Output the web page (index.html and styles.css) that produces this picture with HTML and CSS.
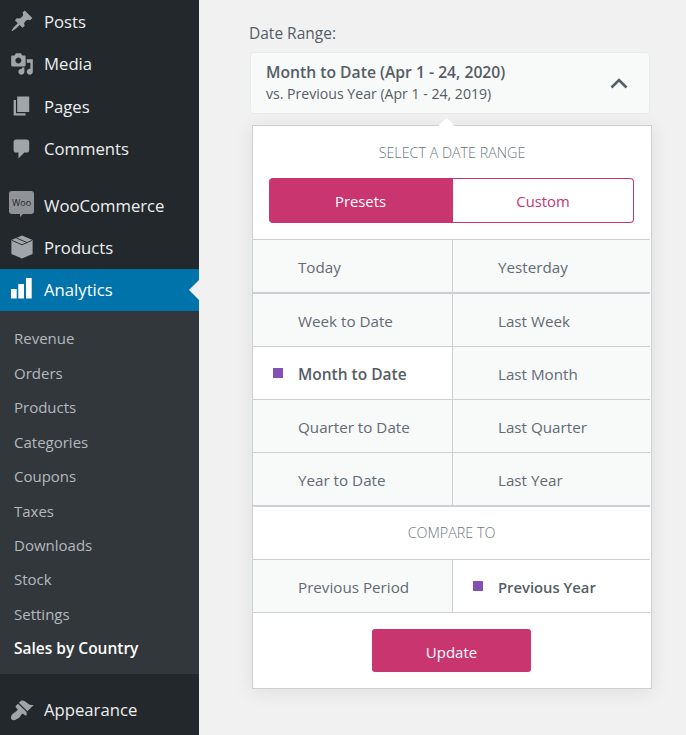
FILE: index.html
```html
<!DOCTYPE html>
<html>
<head>
<title>Analytics</title>
<link rel="stylesheet" href="styles.css">
</head>
<body>

<div class="sidebar">
  <div class="menu">
    <a class="menu-item"><svg class="icon" viewBox="0 0 20 20"><path d="M10.44 3.02l1.82-1.82 6.36 6.35-1.83 1.82c-1.05-.68-2.48-.57-3.41.36l-.75.75c-.92.93-1.04 2.35-.35 3.41l-1.83 1.82-2.41-2.41-2.8 2.79c-.42.42-3.38 2.71-3.8 2.29s1.86-3.39 2.28-3.81l2.79-2.79L4.1 9.36l1.83-1.82c1.05.69 2.48.57 3.41-.36l.75-.75c.93-.92 1.04-2.35.35-3.41z"/></svg>Posts</a>
    <a class="menu-item"><svg class="icon" viewBox="0 0 20 20"><path d="M13 11V4c0-.55-.45-1-1-1h-1.67L9 1H5L3.67 3H2c-.55 0-1 .45-1 1v7c0 .55.45 1 1 1h10c.55 0 1-.45 1-1zM7 4.5c1.38 0 2.5 1.12 2.5 2.5S8.38 9.5 7 9.5 4.5 8.38 4.5 7 5.62 4.5 7 4.5zM14 6h5v10.5c0 1.38-1.12 2.5-2.5 2.5S14 17.88 14 16.5s1.12-2.5 2.5-2.5c.17 0 .34.02.5.05V9h-3V6zm-4 8.05V13h2v3.5c0 1.38-1.12 2.5-2.5 2.5S7 17.88 7 16.5 8.12 14 9.5 14c.17 0 .34.02.5.05z"/></svg>Media</a>
    <a class="menu-item"><svg class="icon" viewBox="0 0 20 20"><path d="M6 15V2h10v13H6zm-1 1h8v2H3V5h2v11z"/></svg>Pages</a>
    <a class="menu-item"><svg class="icon" viewBox="0 0 20 20"><path d="M5 2h9c1.1 0 2 .9 2 2v7c0 1.1-.9 2-2 2h-2l-5 5v-5H5c-1.1 0-2-.9-2-2V4c0-1.1.9-2 2-2z"/></svg>Comments</a>
  </div>
  <div class="menu menu-next">
    <a class="menu-item"><span class="woo"><span class="woo-text">Woo</span></span>WooCommerce</a>
    <a class="menu-item"><svg class="icon" viewBox="0 0 24 26"><path d="M12 0.5L23.5 5.5V20.5L12 25.5L0.5 20.5V5.5Z"/><path d="M1 5.8L12 10.6L23 5.8M6 3.3L17.5 8.2" fill="none" stroke="#23282d" stroke-width="1"/></svg>Products</a>
    <a class="menu-item active"><svg class="icon" viewBox="0 0 21 21"><path d="M0 11h5.7v9.500H0zM7.300 6h5.700v14.500H7.300zM15 0h5.700v20.500H15z"/></svg>Analytics</a>
  </div>
  <div class="submenu">
    <a>Revenue</a>
    <a>Orders</a>
    <a>Products</a>
    <a>Categories</a>
    <a>Coupons</a>
    <a>Taxes</a>
    <a>Downloads</a>
    <a>Stock</a>
    <a>Settings</a>
    <a class="current">Sales by Country</a>
  </div>
  <div class="menu menu-last">
    <a class="menu-item"><svg class="icon" viewBox="0 0 20 20"><path d="M14.48 11.06L7.41 3.99l1.5-1.5c.5-.56 2.3-.47 3.51.32 1.21.8 1.43 1.28 2.91 2.1 1.18.64 2.45 1.26 4.45.85zm-.71.71L6.7 4.7 4.93 6.47c-.39.39-.39 1.02 0 1.41l1.06 1.06c.39.39.39 1.03 0 1.42-.6.6-1.43 1.11-2.21 1.69-.35.26-.7.53-1.01.84C1.43 13.23 0 16.5 1.41 17.91c1.41 1.42 4.68-.02 6.03-1.37.31-.31.58-.66.84-1.01.58-.78 1.09-1.61 1.69-2.21.39-.39 1.03-.39 1.42 0l1.06 1.06c.39.39 1.02.39 1.41 0z"/></svg>Appearance</a>
  </div>
</div>

<div class="main">
  <div class="label">Date Range:</div>
  <div class="trigger">
    <div class="trigger-text">
      <div class="trigger-title">Month to Date (Apr 1 - 24, 2020)</div>
      <div class="trigger-sub">vs. Previous Year (Apr 1 - 24, 2019)</div>
    </div>
    <svg class="chevron" viewBox="0 0 18 12"><path d="M1.500 10.500L9 3l7.500 7.500" fill="none" stroke="#555d66" stroke-width="2.600"/></svg>
  </div>
  <div class="panel">
    <div class="caret"></div>
    <div class="heading heading-top">SELECT A DATE RANGE</div>
    <div class="tabs">
      <div class="tab tab-on">Presets</div>
      <div class="tab">Custom</div>
    </div>
    <div class="options options-top">
      <div class="opt">Today</div>
      <div class="opt">Yesterday</div>
    </div>
    <div class="options options-main">
      <div class="opt">Week to Date</div>
      <div class="opt">Last Week</div>
      <div class="opt selected"><span class="mark"></span>Month to Date</div>
      <div class="opt">Last Month</div>
      <div class="opt">Quarter to Date</div>
      <div class="opt">Last Quarter</div>
      <div class="opt">Year to Date</div>
      <div class="opt">Last Year</div>
    </div>
    <div class="heading heading-compare">COMPARE TO</div>
    <div class="options options-compare">
      <div class="opt">Previous Period</div>
      <div class="opt selected"><span class="mark"></span>Previous Year</div>
    </div>
    <div class="footer">
      <div class="update">Update</div>
    </div>
  </div>
</div>

</body>
</html>
```

FILE: styles.css
```css
html, body {
    margin: 0;
    height: 735px;
    overflow: hidden;
}
body {
    display: flex;
    background-color: #f1f1f1;
    font-family: "Open Sans", sans-serif;
    color: #555d66;
}
.sidebar {
    width: 199px;
    height: 735px;
    flex-shrink: 0;
    background-color: #23282d;
}
.menu {
    padding-top: 0.4px;
}
.menu-next {
    padding-top: 14px;
}
.menu-last {
    padding-top: 15px;
}
.menu-item {
    position: relative;
    display: flex;
    align-items: center;
    height: 42.4px;
    padding-left: 44px;
    font-size: 16.700px;
    color: #eeeeee;
}
.icon {
    position: absolute;
    left: 10px;
    top: 9px;
    width: 24px;
    height: 24px;
    fill: #a0a5aa;
}
.woo {
    position: absolute;
    left: 9px;
    top: 7px;
    width: 25px;
    height: 23px;
    border-radius: 3px;
    background-color: #8f9398;
    display: flex;
    align-items: center;
    justify-content: center;
}
.woo::after {
    content: "";
    position: absolute;
    left: 11px;
    bottom: -3px;
    border-top: 3px solid #8f9398;
    border-right: 3px solid transparent;
}
.woo-text {
    font-size: 9px;
    color: #23282d;
}
.active {
    background-color: #0073aa;
    color: #ffffff;
}
.active .icon {
    fill: #ffffff;
    left: 11px;
    top: 9px;
    width: 21px;
    height: 21px;
}
.active::after {
    content: "";
    position: absolute;
    right: 0;
    top: 11px;
    border: 10px solid transparent;
    border-left: 0;
    border-right-color: #f1f1f1;
}
.submenu {
    background-color: #32373c;
    padding: 10px 0 8px;
}
.submenu a {
    display: flex;
    align-items: center;
    height: 34.450px;
    padding-left: 14px;
    font-size: 15px;
    color: #b4b9be;
}
.submenu .current {
    color: #ffffff;
    font-weight: 600;
    font-size: 15.500px;
}
.main {
    flex: 1;
    padding: 22px 0 0 50px;
}
.label {
    font-size: 15.500px;
    line-height: 22px;
    margin-bottom: 8px;
}
.trigger {
    box-sizing: border-box;
    width: 400px;
    height: 62px;
    margin-left: 1px;
    padding: 0 21px 0 15px;
    display: flex;
    align-items: center;
    justify-content: space-between;
    background-color: #f8f9f9;
    border: 1px solid #e8eaeb;
    border-radius: 4px;
}
.trigger-title {
    font-size: 15.700px;
    font-weight: 600;
    line-height: 21px;
}
.trigger-sub {
    font-size: 14.100px;
    line-height: 21px;
}
.chevron {
    width: 18px;
    height: 12px;
}
.panel {
    position: relative;
    box-sizing: border-box;
    width: 400px;
    height: 564px;
    margin: 11px 0 0 3px;
    background-color: #ffffff;
    border: 1px solid #ccd0d4;
    box-shadow: 0 3px 20px rgba(0, 0, 0, 0.08);
}
.caret {
    position: absolute;
    left: 188px;
    top: -6px;
    width: 11px;
    height: 11px;
    background-color: #ffffff;
    transform: rotate(45deg);
}
.heading {
    position: relative;
    text-align: center;
    font-size: 14.300px;
    font-weight: 300;
    color: #6c7781;
}
.heading-top {
    padding-top: 17px;
    line-height: 20px;
    margin-bottom: 15px;
}
.heading-compare {
    line-height: 52px;
    margin-right: 1px;
}
.tabs {
    display: flex;
    height: 45px;
    margin: 0 17px 16px 16px;
    font-size: 14.800px;
}
.tab {
    flex: 1;
    display: flex;
    align-items: center;
    justify-content: center;
    padding-top: 1px;
    background-color: #ffffff;
    color: #c9356e;
    border: 1px solid #c9356e;
    border-left: 0;
    border-radius: 0 4px 4px 0;
}
.tab-on {
    flex: 0 0 184px;
    box-sizing: border-box;
    background-color: #c9356e;
    color: #ffffff;
    border-radius: 4px 0 0 4px;
}
.options {
    display: grid;
    grid-template-columns: 200px 197px;
    margin-right: 1px;
}
.options-top {
    border-top: 1px solid #ccd0d4;
    border-bottom: 2px solid #ccd0d4;
    grid-template-rows: 52px;
}
.options-main {
    border-bottom: 2px solid #ccd0d4;
    grid-template-rows: 53px 53px 53px 52px;
}
.options-compare {
    border-top: 1px solid #ccd0d4;
    border-bottom: 1px solid #ccd0d4;
    grid-template-rows: 52px;
}
.opt {
    display: flex;
    align-items: center;
    padding: 2px 0 0 45px;
    font-size: 15.200px;
    color: #636b74;
    background-color: #f8f9f9;
    box-shadow: inset 0 -1px 0 #ccd0d4;
}
.options-main .opt {
    padding-top: 1px;
}
.opt:nth-child(odd) {
    border-right: 1px solid #ccd0d4;
}
.options-top .opt,
.options-compare .opt,
.opt:nth-last-child(-n+2) {
    box-shadow: none;
}
.selected {
    background-color: #ffffff;
    font-weight: 600;
    font-size: 15.500px;
    color: #555d66;
}
.options-compare .selected {
    font-size: 14.800px;
}
.mark {
    width: 10px;
    height: 10px;
    margin: -3px 15px 0 -25px;
    background-color: #8351b5;
}
.footer {
    display: flex;
    justify-content: center;
    padding: 16px 1px 0 0;
}
.update {
    box-sizing: border-box;
    width: 159px;
    height: 43px;
    padding-top: 2px;
    display: flex;
    align-items: center;
    justify-content: center;
    background-color: #c9356e;
    color: #ffffff;
    font-size: 15px;
    font-weight: 500;
    border-radius: 3px;
}
```
